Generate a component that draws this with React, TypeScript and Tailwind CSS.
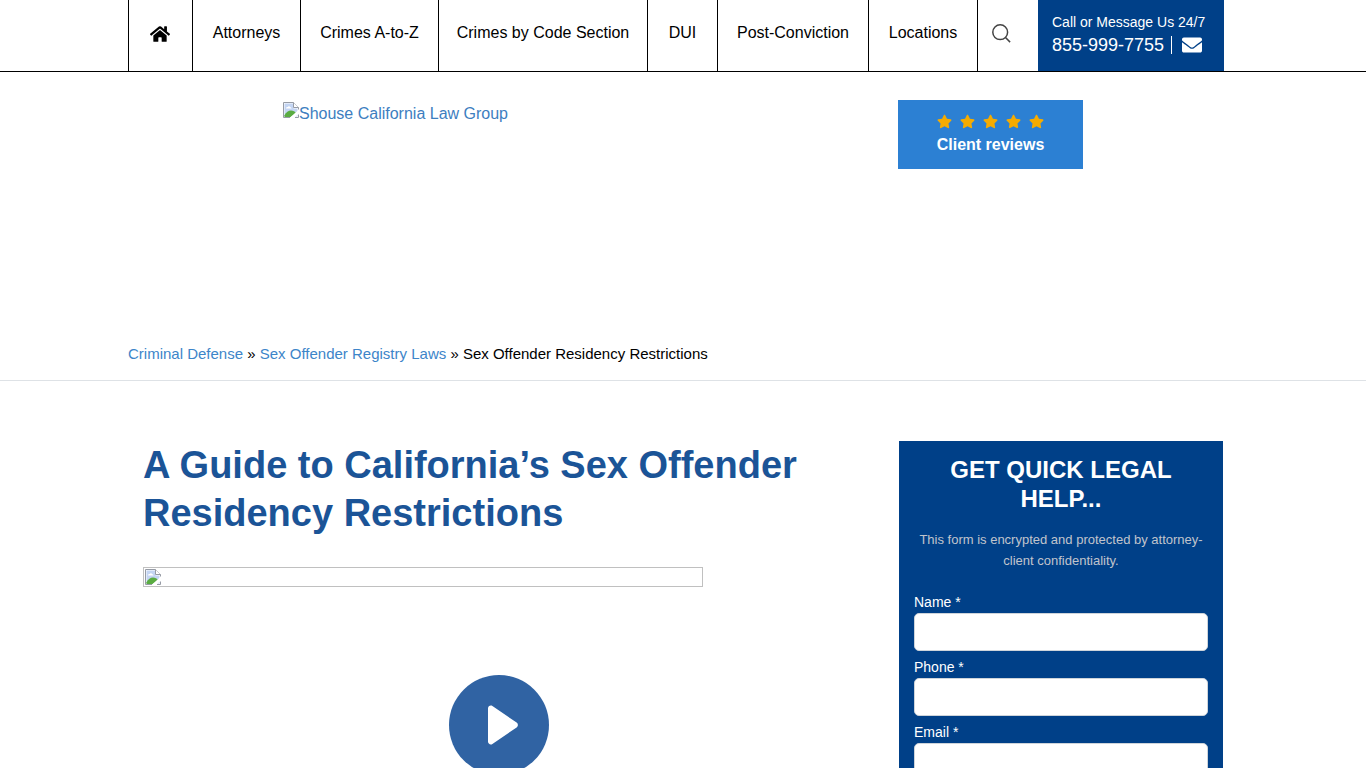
import { FaEnvelope, FaHome, FaStar } from "react-icons/fa";

const NAV_ITEMS = [
  "Attorneys",
  "Crimes A-to-Z",
  "Crimes by Code Section",
  "DUI",
  "Post-Conviction",
  "Locations",
];

const FORM_FIELDS = [
  { id: "name", label: "Name *", type: "text" },
  { id: "phone", label: "Phone *", type: "tel" },
  { id: "email", label: "Email *", type: "email" },
];

const SearchIcon = () => (
  <svg viewBox="0 0 20 20" className="size-5" fill="none" stroke="#444" strokeWidth="1.5">
    <circle cx="8.2" cy="8.2" r="7.4" />
    <path d="m13.500 13.500 4.600 4.600" />
  </svg>
);

// Placeholder shown where a picture has not loaded
const MissingImage = () => (
  <svg viewBox="0 0 16 16" className="size-4 shrink-0">
    <path d="M.5.5h10l5 5v10H.5z" fill="#fff" />
    <path d="M1.500 1.500h9v5h4v8h-13z" fill="#c4d5f3" />
    <path d="M3 6.500c0-1 .9-1.600 1.700-1.400C5 4 6.900 4 7.200 5.200c.9 0 1.300.6 1.300 1.300z" fill="#fff" />
    <path d="M1.500 14.500v-1.200C3 10.500 5.500 8.500 8 8.500c2.200 0 4 1 5 2.500l-6 4.500H1.500z" fill="#5aac42" />
    <path d="M16 7.500 6.500 16H11l5-4.500z" fill="#fff" />
    <path d="M.5 15.500V.5h10l5 5v2M.5 15.500H7M15.500 12.500v3h-3.500" fill="none" stroke="#969ba5" />
    <path d="M10.500.5v5h5" fill="#fff" stroke="#969ba5" />
  </svg>
);

const TopNav = () => (
  <nav className="border-b border-black">
    <div className="mx-auto max-w-[1110px] pr-[14px]">
      <div className="grid h-[71px] grid-cols-[64fr_108fr_138fr_209fr_70fr_151fr_109fr_61fr_186fr] whitespace-nowrap text-base text-black">
        <a
          href="#home"
          aria-label="Home"
          className="flex items-center justify-center border-l border-black pr-px pb-1"
        >
          <FaHome className="size-5" />
        </a>
        {NAV_ITEMS.map((item) => (
          <a
            key={item}
            href="#menu"
            className="flex items-center justify-center border-l border-black pb-[6px]"
          >
            {item}
          </a>
        ))}
        <button
          type="button"
          aria-label="Search"
          className="flex items-center border-l border-black pb-1 pl-[14px]"
        >
          <SearchIcon />
        </button>
        <div className="flex flex-col bg-[#004088] pt-[11px] pl-[14px] text-white">
          <span className="text-sm leading-[22px]">Call or Message Us 24/7</span>
          <div className="flex items-center text-lg leading-6">
            <a href="tel:8559997755">855-999-7755</a>
            <span className="ml-[7px] h-[18px] w-px bg-white" />
            <a href="#contact" aria-label="Email us" className="ml-[10px]">
              <FaEnvelope className="size-5" />
            </a>
          </div>
        </div>
      </div>
    </div>
  </nav>
);

const Header = () => (
  <header className="border-b border-[#dee2e6]">
    <div className="mx-auto max-w-[1110px]">
      <div className="flex h-[268px] items-start justify-between px-[155px] pt-7">
        <a href="#home" className="flex pt-[2px] text-base text-[#3d7ebf]">
          <MissingImage />
          Shouse California Law Group
        </a>
        <a
          href="#reviews"
          className="flex h-[69px] w-[185px] flex-col items-center bg-[#2c80d3] pt-[14px] text-white"
        >
          <span className="flex gap-2 text-[#f5ab00]">
            {[1, 2, 3, 4, 5].map((star) => (
              <FaStar key={star} className="size-[15px]" />
            ))}
          </span>
          <span className="pt-1 text-base font-bold">Client reviews</span>
        </a>
      </div>
      <p className="pt-[2px] pb-[14px] text-[15px] leading-6 text-black">
        <a href="#defense" className="text-[#3d85c9]">
          Criminal Defense
        </a>{" "}
        »{" "}
        <a href="#registry" className="text-[#3d85c9]">
          Sex Offender Registry Laws
        </a>{" "}
        » Sex Offender Residency Restrictions
      </p>
    </div>
  </header>
);

const Article = () => (
  <article>
    <h1 className="text-[38px] leading-12 font-bold text-[#1b5497]">
      A Guide to California’s Sex Offender Residency Restrictions
    </h1>
    <div className="relative mt-[30px] h-[315px]">
      <div className="flex h-5 max-w-[560px] items-center border border-[#c0c0c0] pl-px">
        <MissingImage />
      </div>
      <button
        type="button"
        aria-label="Play video"
        className="absolute inset-0 m-auto flex size-[100px] items-center justify-center rounded-full bg-[#3063a3] text-white"
      >
        <svg viewBox="0 0 100 100" className="size-[100px]" fill="currentColor">
          <path d="M39 33.500c0-2.300 2.500-3.700 4.400-2.400l24.200 16.500c1.700 1.100 1.700 3.600 0 4.800L43.400 68.900c-1.900 1.300-4.400-.1-4.400-2.400z" />
        </svg>
      </button>
    </div>
  </article>
);

const ContactForm = () => (
  <form className="bg-[#004088] px-[15px] pt-[14px] pb-6">
    <h2 className="text-center text-2xl leading-[29px] font-bold text-white">
      GET QUICK LEGAL HELP...
    </h2>
    <p className="pt-4 pb-[21px] text-center text-[13px] leading-[21px] text-[#c0c4cc]">
      This form is encrypted and protected by attorney-client confidentiality.
    </p>
    <div className="flex flex-col gap-[6px]">
      {FORM_FIELDS.map((field) => (
        <div key={field.id}>
          <label htmlFor={field.id} className="block text-sm leading-[21px] text-white">
            {field.label}
          </label>
          <input
            id={field.id}
            type={field.type}
            className="block h-[38px] w-full rounded-[5px] border border-[#ced4da] bg-white px-3 text-base text-black"
          />
        </div>
      ))}
    </div>
  </form>
);

export default function App() {
  return (
    <div className="bg-white font-['Liberation_Sans',Arial,sans-serif]">
      <TopNav />
      <Header />
      <main className="mx-auto grid max-w-[1110px] grid-cols-[1fr_324px] items-start gap-11 px-[15px] pt-[60px]">
        <Article />
        <ContactForm />
      </main>
    </div>
  );
}
